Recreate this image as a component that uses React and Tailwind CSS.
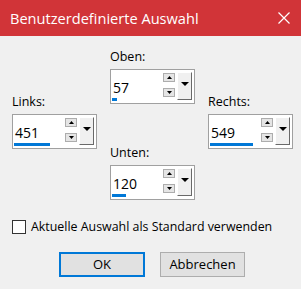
function Tri({ up, w = 5, h = 3 }) {
  return (
    <svg width={w} height={h} viewBox={`0 0 ${w} ${h}`} className="block">
      <polygon points={up ? `0,${h} ${w},${h} ${w / 2},0` : `0,0 ${w},0 ${w / 2},${h}`} fill="#000" />
    </svg>
  )
}

function SpinField({ label, value, bar }) {
  return (
    <div className="flex flex-col">
      <div className="h-4 leading-4 mb-1 text-[12.5px] text-black">{label}</div>
      <div className="w-[85px] h-[35px] border border-[#a0a0a0] bg-white flex">
        <div className="w-[52px] flex flex-col">
          <span className="text-[14px] leading-4 mt-[10px] ml-[2px] text-black">{value}</span>
          <div className="mt-auto mb-[2px] ml-[1px] h-[3px] bg-[#0078d7]" style={{ width: bar }} />
        </div>
        <div className="w-[12px] flex flex-col">
          <div className="mt-[3px] h-[9px] border border-[#adadad] bg-[#e5e5e5] flex items-center justify-center">
            <Tri up />
          </div>
          <div className="mt-[6px] h-[9px] border border-[#adadad] bg-[#e5e5e5] flex items-center justify-center">
            <Tri />
          </div>
        </div>
        <div className="ml-[2px] mt-[2px] w-[15px] h-[28px] bg-[#f0f0f0] border-t border-l border-white border-r border-b border-r-[#696969] border-b-[#696969] flex justify-center pt-[9px]">
          <Tri w={8} h={4} />
        </div>
      </div>
    </div>
  )
}

export default function App() {
  return (
    <div className="w-[301px] h-[289px] bg-[#f0f0f0] flex flex-col font-['Open_Sans',sans-serif] text-black">
      <div className="h-9 shrink-0 bg-[#d13438] flex items-center justify-between pl-[10px] pr-[11px] text-white">
        <span className="text-[14.6px] leading-5">Benutzerdefinierte Auswahl</span>
        <svg width="12" height="12" viewBox="0 0 12 12">
          <path d="M0.5 0.5 L11.5 11.5 M11.5 0.5 L0.5 11.5" stroke="#fff" strokeWidth="1.2" />
        </svg>
      </div>

      <div className="flex pl-3 gap-[13px] pt-[13px]">
        <div className="pt-[45px]">
          <SpinField label="Links:" value="451" bar={36} />
        </div>
        <div className="flex flex-col">
          <SpinField label="Oben:" value="57" bar={5} />
          <div className="mt-[41px]">
            <SpinField label="Unten:" value="120" bar={14} />
          </div>
        </div>
        <div className="pt-[45px]">
          <SpinField label="Rechts:" value="549" bar={43} />
        </div>
      </div>

      <label className="mt-[19px] ml-3 flex items-center h-4 gap-[5px] text-[12.4px]">
        <span className="w-[14px] h-[14px] border border-[#333] bg-white" />
        <span>Aktuelle Auswahl als Standard verwenden</span>
      </label>

      <div className="mt-[17px] pl-[59px] flex gap-[15px]">
        <button className="w-[86px] h-[25px] border-2 border-[#0078d7] bg-[#e1e1e1] text-[13px]">OK</button>
        <button className="w-[85px] h-[25px] border border-[#adadad] bg-[#e1e1e1] text-[13px]">Abbrechen</button>
      </div>
    </div>
  )
}
